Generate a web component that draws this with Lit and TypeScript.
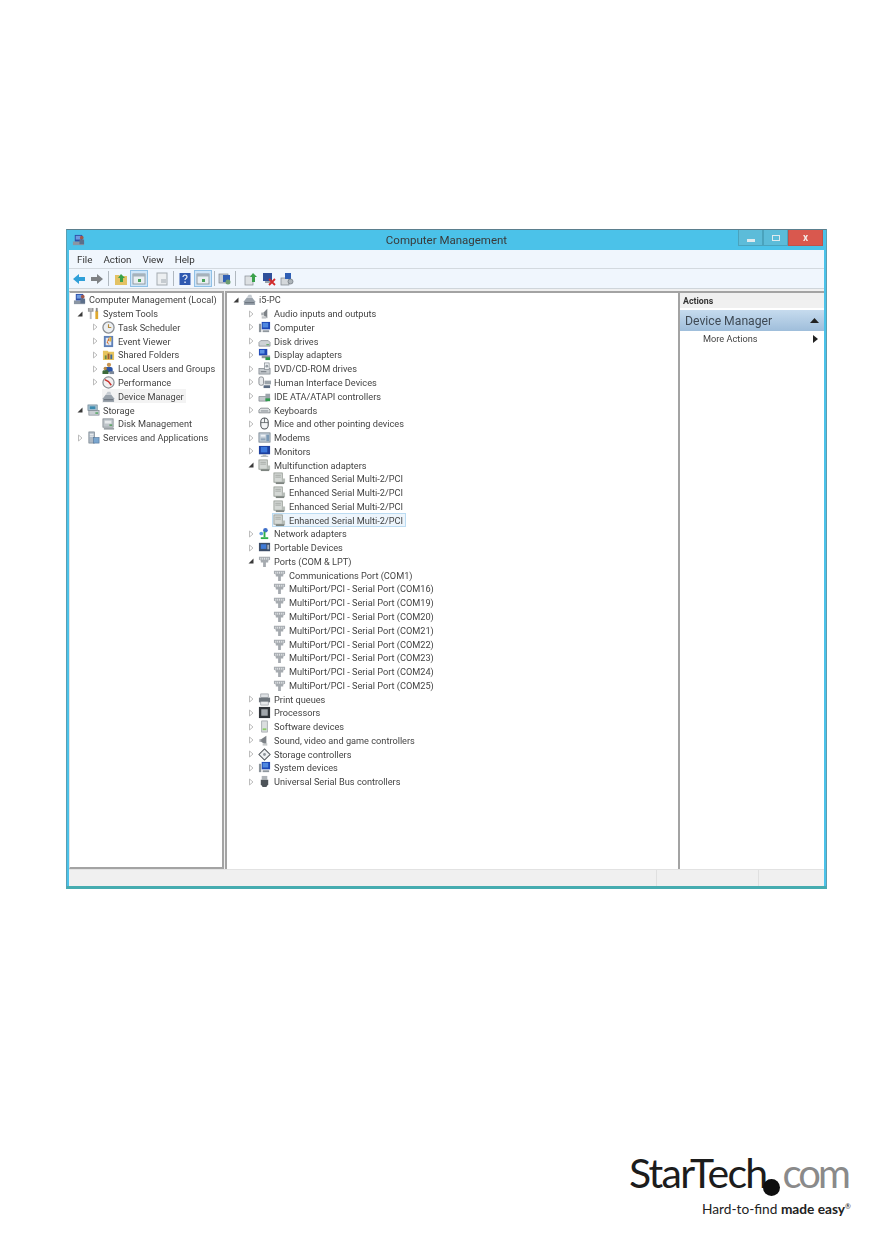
import { LitElement, html, css, svg } from "lit";
import { customElement } from "lit/decorators.js";

const icons: Record<string, any> = {
  mgmt: svg`<rect x="1" y="8" width="12" height="4" fill="#8a95a3"/><rect x="3" y="1" width="8" height="7" fill="#2c4fa8"/><rect x="4" y="2" width="6" height="4" fill="#6f9be0"/><circle cx="10.5" cy="4" r="2" fill="#a0574c"/><rect x="8" y="6" width="5" height="5" fill="#5c6f8a"/>`,
  tools: svg`<rect x="3" y="1" width="2" height="12" fill="#b9b9b9"/><path d="M1 1h2v3h2V1h2v4H1z" fill="#9a9a9a"/><rect x="9" y="4" width="3" height="9" fill="#e0a92c"/><rect x="9.5" y="1" width="2" height="4" fill="#8a8a8a"/>`,
  clock: svg`<circle cx="7" cy="7" r="6" fill="#eceff2" stroke="#8b8f94" stroke-width="1.4"/><path d="M7 3.5V7h3" fill="none" stroke="#b58a3a" stroke-width="1.2"/>`,
  event: svg`<rect x="2" y="1" width="10" height="12" fill="#5e80b8"/><rect x="4" y="3" width="6" height="8" fill="#dfe8f4"/><path d="M7 3l1 3-2 1 2 4-3-3 1-2z" fill="#d9702a"/><rect x="8" y="2" width="2" height="5" fill="#e3b13a"/>`,
  folder: svg`<path d="M1 3h5l1 1h6v9H1z" fill="#e7c45c"/><rect x="3" y="8" width="2" height="4" fill="#6a8a40"/><rect x="6" y="6" width="2" height="6" fill="#a05a30"/><rect x="9" y="7" width="2" height="5" fill="#3d6a9a"/>`,
  users: svg`<circle cx="7.5" cy="3" r="2.3" fill="#c9954f"/><path d="M3.5 11V7.500c0-1.500 1-2.200 2-2.200h4c1 0 2 .8 2 2.200V11z" fill="#2d55a5"/><circle cx="3.5" cy="7" r="1.8" fill="#b88844"/><path d="M.5 13v-2.500c0-1 1-1.500 2-1.500h2.500c1 0 2 .5 2 1.500V13z" fill="#3d6a3a"/><rect x="8" y="10" width="5" height="3" fill="#7c8898"/>`,
  perf: svg`<circle cx="7" cy="7" r="6" fill="#f1eff0" stroke="#8b8f94" stroke-width="1.3"/><path d="M3 4l4 2 3 4" fill="none" stroke="#c9302c" stroke-width="1.5"/>`,
  dm: svg`<path d="M1 9l3-4h6l3 4v4H1z" fill="#9aa3ac"/><path d="M4 5l2-3h3l1 3z" fill="#c4cad0"/><rect x="2" y="10" width="10" height="1" fill="#5f6871"/>`,
  storage: svg`<rect x="1" y="1" width="10" height="6" fill="#a9c1cf" stroke="#64808f" stroke-width=".7"/><rect x="3" y="2.500" width="6" height="3" fill="#3b8bb0"/><rect x="2" y="7" width="11" height="5" fill="#c9ced3" stroke="#7d868e" stroke-width=".7"/><rect x="9" y="9" width="3" height="1.500" fill="#4aa35a"/>`,
  disk: svg`<rect x="1" y="2" width="11" height="9" fill="#bfc5ca" stroke="#7c848b" stroke-width=".8"/><rect x="3" y="4" width="7" height="3" fill="#e7eaec"/><path d="M2 12h11v1.500H2z" fill="#8a9197"/><rect x="8" y="8" width="3" height="1.500" fill="#4c9c54"/>`,
  services: svg`<rect x="2" y="1" width="6" height="12" fill="#aeb9c4" stroke="#6f7b87" stroke-width=".7"/><rect x="3" y="3" width="4" height="1" fill="#fff"/><rect x="3" y="5" width="4" height="1" fill="#fff"/><rect x="7" y="7" width="6" height="6" fill="#7aa6cf" stroke="#56789a" stroke-width=".7"/>`,
  audio: svg`<path d="M6 6l4-4v10L6 9z" fill="#7d8287"/><rect x="3.500" y="6" width="2.500" height="3" fill="#a7abaf"/><rect x="4" y="10" width="5" height="2.500" fill="#c2c5c8"/>`,
  computer: svg`<rect x="4" y="1" width="9" height="8" fill="#1d46b5"/><rect x="5" y="2" width="6" height="5" fill="#4f88e0"/><rect x="1" y="3" width="2.500" height="9" fill="#8c949b"/><rect x="5" y="10" width="7" height="2" fill="#8f979e"/>`,
  diskdrive: svg`<path d="M1 8l2-2h8l2 2v4H1z" fill="#cfd3d6" stroke="#7e858b" stroke-width=".7"/><rect x="9" y="10" width="3" height="1" fill="#4a9c50"/>`,
  display: svg`<rect x="1" y="1" width="9" height="7" fill="#1d46b5"/><rect x="2" y="2" width="5" height="4" fill="#5e94e6"/><rect x="4" y="8" width="9" height="3" fill="#8f979e"/><rect x="8" y="10" width="5" height="3" fill="#2b9446"/>`,
  dvd: svg`<rect x="1" y="7" width="12" height="6" fill="#c4c9cd" stroke="#737b82" stroke-width=".7"/><rect x="7" y="1" width="5" height="7" fill="#eef1f3" stroke="#7b838a" stroke-width=".7"/><circle cx="9.500" cy="4.500" r="1.500" fill="#98a0a6"/><rect x="3" y="10" width="6" height="1" fill="#6b7279"/>`,
  hid: svg`<rect x="1" y="1" width="5" height="9" rx="2" fill="#e7e9eb" stroke="#6c7278" stroke-width=".8"/><rect x="7" y="5" width="7" height="4" fill="#9aa2a9"/><rect x="6" y="10" width="7" height="3" fill="#5a6b82"/>`,
  ide: svg`<path d="M1 7h9v5H1z" fill="#c3c8cc" stroke="#7b8289" stroke-width=".7"/><rect x="8" y="4" width="5" height="8" fill="#9ca4ab"/><rect x="8" y="9" width="5" height="3" fill="#2f9a4c"/>`,
  kb: svg`<path d="M1 6.500l2-2h8l2 2v3H1z" fill="#dfe2e4" stroke="#6e757b" stroke-width=".8"/><rect x="3" y="7" width="8" height="1" fill="#7b8288"/>`,
  mouse: svg`<rect x="3" y="1" width="8" height="12" rx="4" fill="#f4f5f6" stroke="#4e5358" stroke-width="1.100"/><path d="M7 1v5M3 6h8" stroke="#4e5358" stroke-width=".8"/>`,
  modem: svg`<rect x="1" y="2" width="12" height="10" fill="#c1ccd6" stroke="#6f7c88" stroke-width=".8"/><rect x="3" y="4" width="5" height="2" fill="#eef2f6"/><rect x="9" y="4" width="3" height="7" fill="#7b99b5"/><rect x="3" y="8" width="5" height="2" fill="#8fa3b6"/>`,
  monitor: svg`<rect x="1" y="1" width="12" height="9" fill="#1d3f9e"/><rect x="3" y="2" width="7" height="6" fill="#3c78dc"/><path d="M5 10h4v1.500h2V13H3v-1.500h2z" fill="#b6bcc1"/>`,
  mf: svg`<rect x="1" y="1" width="9" height="10" fill="#d4d8d5" stroke="#8a9089" stroke-width=".8"/><rect x="2.500" y="3" width="6" height="1" fill="#a3a8a4"/><rect x="2.500" y="5" width="6" height="1" fill="#a3a8a4"/><rect x="10" y="7" width="3" height="5" fill="#b7bdb8"/><rect x="3" y="11" width="9" height="2" fill="#7e8580"/>`,
  net: svg`<circle cx="8" cy="3.500" r="2.500" fill="#3f6fc9"/><circle cx="3.500" cy="7" r="2" fill="#5c9ae0"/><path d="M3 11h8v2H3z" fill="#2fae4a"/><rect x="6" y="5" width="2" height="6" fill="#2fae4a"/>`,
  portable: svg`<rect x="1" y="2" width="12" height="9" fill="#3c4d68"/><rect x="3" y="3.500" width="6" height="5" fill="#3f7ad6"/><rect x="10" y="4" width="2" height="5" fill="#a8b2bd"/>`,
  port: svg`<path d="M1 2h12v3l-2 1v2H8.500v5h-3V8H3V6L1 5z" fill="#a6abb0"/><path d="M3 3v2M5 3v2M7 3v2M9 3v2M11 3v2" stroke="#eef0f2" stroke-width=".9"/>`,
  printer: svg`<rect x="3" y="1" width="8" height="4" fill="#dfe2e5" stroke="#7c838a" stroke-width=".6"/><rect x="1" y="5" width="12" height="5" fill="#6e757c"/><rect x="3" y="9" width="8" height="4" fill="#e7e9eb" stroke="#7c838a" stroke-width=".6"/>`,
  cpu: svg`<rect x="1" y="1" width="12" height="12" fill="#2f3338"/><rect x="3.500" y="3.500" width="7" height="7" fill="#a1a6ab"/>`,
  sw: svg`<rect x="4" y="1" width="6" height="12" fill="#dbdedf" stroke="#8b9196" stroke-width=".7"/><rect x="5" y="9" width="4" height="2" fill="#8ccc6a"/>`,
  sound: svg`<path d="M3 6l6-4v10L3 8z" fill="#7d8287"/><rect x="1.500" y="5.500" width="2" height="3" fill="#a7abaf"/><rect x="5" y="10" width="5" height="2.500" fill="#c6c9cb"/>`,
  stctl: svg`<path d="M7 1l6 6-6 6-6-6z" fill="#eef0f2" stroke="#4f555a" stroke-width="1.100"/><circle cx="7" cy="7" r="1.500" fill="#8e959b"/>`,
  usb: svg`<rect x="4" y="1" width="6" height="4" fill="#aeb3b8"/><path d="M3 5h8v5l-2 3H5l-2-3z" fill="#4d5359"/>`,
  back: svg`<path d="M1 7l6-5v3h6v4H7v3z" fill="#2f9fd8"/>`,
  forward: svg`<path d="M13 7L7 2v3H1v4h6v3z" fill="#7e8184"/>`,
  up: svg`<path d="M1 3h4l1 1h7v9H1z" fill="#e3c264"/><path d="M7 2l4 4H9v4H6V6H4z" fill="#3aa14a"/>`,
  box: svg`<rect x="1" y="2" width="12" height="10" fill="#e9eef2" stroke="#8a949c" stroke-width=".9"/><rect x="1" y="2" width="12" height="2.500" fill="#a6b2bb"/><rect x="6" y="7" width="3" height="3" fill="#4aa35a"/>`,
  page: svg`<rect x="2" y="1" width="10" height="12" fill="#eceff1" stroke="#a4abb1" stroke-width="1"/><rect x="6" y="7" width="5" height="4" fill="#c5cbd0"/>`,
  help: svg`<rect x="1.500" y="1" width="11" height="12" fill="#2f59b0"/><path d="M5 5c0-2.500 4-2.500 4 0 0 1.500-2 1.500-2 3" fill="none" stroke="#dfe8f7" stroke-width="1.200"/><rect x="6.300" y="9.500" width="1.500" height="1.500" fill="#dfe8f7"/>`,
  scan: svg`<rect x="1" y="2" width="9" height="9" fill="#c6cdd3" stroke="#7f8890" stroke-width=".7"/><rect x="5" y="3" width="7" height="7" fill="#2f5fb5"/><circle cx="10" cy="10" r="2.500" fill="#6e9e72"/>`,
  update: svg`<rect x="1" y="4" width="8" height="9" fill="#dde1e3" stroke="#868d93" stroke-width=".7"/><path d="M9 1l4 4h-2v5H8V5H6z" fill="#3aa14a"/>`,
  remove: svg`<rect x="1" y="1" width="9" height="8" fill="#2f4f9a"/><rect x="3" y="9" width="6" height="2" fill="#9aa2a9"/><path d="M7 7l6 6M13 7l-6 6" stroke="#d22a2a" stroke-width="1.800"/>`,
  hw: svg`<rect x="1" y="6" width="8" height="7" fill="#d4d8db" stroke="#7d848a" stroke-width=".7"/><rect x="5" y="1" width="6" height="6" fill="#2f5fb5"/><circle cx="10.500" cy="9.500" r="2.500" fill="#aeb5ba" stroke="#6f767c" stroke-width=".7"/>`,
};
icons.pc = icons.dm;
icons.sys = icons.computer;

type Row = { d: number; label: string; icon: string; open?: boolean; leaf?: boolean; cls?: string };

const left: Row[] = [
  { d: 0, label: "Computer Management (Local)", icon: "mgmt", leaf: true, cls: "root" },
  { d: 0, label: "System Tools", icon: "tools", open: true },
  { d: 1, label: "Task Scheduler", icon: "clock" },
  { d: 1, label: "Event Viewer", icon: "event" },
  { d: 1, label: "Shared Folders", icon: "folder" },
  { d: 1, label: "Local Users and Groups", icon: "users" },
  { d: 1, label: "Performance", icon: "perf" },
  { d: 1, label: "Device Manager", icon: "dm", leaf: true, cls: "soft" },
  { d: 0, label: "Storage", icon: "storage", open: true },
  { d: 1, label: "Disk Management", icon: "disk", leaf: true },
  { d: 0, label: "Services and Applications", icon: "services" },
];

const serial = (label: string, cls?: string): Row => ({ d: 2, label, icon: "mf", leaf: true, cls });
const port = (label: string): Row => ({ d: 2, label, icon: "port", leaf: true });
const center: Row[] = [
  { d: 0, label: "i5-PC", icon: "pc", open: true },
  { d: 1, label: "Audio inputs and outputs", icon: "audio" },
  { d: 1, label: "Computer", icon: "computer" },
  { d: 1, label: "Disk drives", icon: "diskdrive" },
  { d: 1, label: "Display adapters", icon: "display" },
  { d: 1, label: "DVD/CD-ROM drives", icon: "dvd" },
  { d: 1, label: "Human Interface Devices", icon: "hid" },
  { d: 1, label: "IDE ATA/ATAPI controllers", icon: "ide" },
  { d: 1, label: "Keyboards", icon: "kb" },
  { d: 1, label: "Mice and other pointing devices", icon: "mouse" },
  { d: 1, label: "Modems", icon: "modem" },
  { d: 1, label: "Monitors", icon: "monitor" },
  { d: 1, label: "Multifunction adapters", icon: "mf", open: true },
  serial("Enhanced Serial Multi-2/PCI"),
  serial("Enhanced Serial Multi-2/PCI"),
  serial("Enhanced Serial Multi-2/PCI"),
  serial("Enhanced Serial Multi-2/PCI", "sel"),
  { d: 1, label: "Network adapters", icon: "net" },
  { d: 1, label: "Portable Devices", icon: "portable" },
  { d: 1, label: "Ports (COM & LPT)", icon: "port", open: true },
  port("Communications Port (COM1)"),
  port("MultiPort/PCI - Serial Port (COM16)"),
  port("MultiPort/PCI - Serial Port (COM19)"),
  port("MultiPort/PCI - Serial Port (COM20)"),
  port("MultiPort/PCI - Serial Port (COM21)"),
  port("MultiPort/PCI - Serial Port (COM22)"),
  port("MultiPort/PCI - Serial Port (COM23)"),
  port("MultiPort/PCI - Serial Port (COM24)"),
  port("MultiPort/PCI - Serial Port (COM25)"),
  { d: 1, label: "Print queues", icon: "printer" },
  { d: 1, label: "Processors", icon: "cpu" },
  { d: 1, label: "Software devices", icon: "sw" },
  { d: 1, label: "Sound, video and game controllers", icon: "sound" },
  { d: 1, label: "Storage controllers", icon: "stctl" },
  { d: 1, label: "System devices", icon: "sys" },
  { d: 1, label: "Universal Serial Bus controllers", icon: "usb" },
];

const tools: { icon?: string; cls: string }[] = [
  { icon: "back", cls: "t" },
  { icon: "forward", cls: "t" },
  { cls: "sep wide" },
  { icon: "up", cls: "t" },
  { icon: "box", cls: "t on" },
  { icon: "page", cls: "t gap5" },
  { cls: "sep" },
  { icon: "help", cls: "t" },
  { icon: "box", cls: "t on" },
  { cls: "sep" },
  { icon: "scan", cls: "t tight" },
  { cls: "sep" },
  { icon: "update", cls: "t gap3" },
  { icon: "remove", cls: "t" },
  { icon: "hw", cls: "t" },
];

const ic = (name: string, size = 13) =>
  html`<svg class="ic" width=${size} height=${size} viewBox="0 0 14 14">${icons[name]}</svg>`;

@customElement("app-root")
export class AppRoot extends LitElement {
  static styles = css`
    :host {
      display: flex;
      flex-direction: column;
      align-items: flex-start;
      height: 1259px;
      background: #fff;
      padding: 229px 0 0 66px;
      box-sizing: border-box;
      font-family: Roboto, "Open Sans", sans-serif;
      color: #444;
      overflow: hidden;
    }
    .win {
      width: 761px;
      height: 660px;
      box-sizing: border-box;
      background: #4bc2e9;
      border: 1px solid #5a9fb3;
      border-top-color: #5b7f8e;
      border-bottom: 3px solid #46acb0;
      display: flex;
      flex-direction: column;
      filter: blur(0.55px);
      padding: 0 2px 0 2px;
    }
    .title {
      height: 20px;
      display: grid;
      grid-template-columns: 76px 1fr 86px;
      align-items: center;
      font-size: 11.500px;
      color: #3a3a3a;
    }
    .title .name { text-align: center; padding-left: 10px; }
    .title svg { margin-left: 3px; }
    .caps { display: flex; justify-self: end; align-self: start; margin-right: 1px; }
    .cap {
      width: 25px;
      height: 16px;
      box-sizing: border-box;
      display: flex;
      align-items: center;
      justify-content: center;
      background: #5cbcd9;
      border: 1px solid #4aa3bd;
      border-top: 0;
    }
    .cap.close {
      width: 35px;
      background: #d9584e;
      border-color: #c0534a;
      color: #f4e9e6;
      font-size: 10px;
      font-weight: 700;
    }
    .cap i { display: block; background: #dfeaee; }
    .cap .min { width: 8px; height: 3px; margin-top: 5px; }
    .cap .max { width: 8px; height: 6px; border: 1.500px solid #dfeaee; background: #5cbcd9; box-sizing: border-box; }
    .menu {
      height: 18px;
      background: #f0f6fd;
      border-bottom: 1px solid #d3d9df;
      display: flex;
      align-items: center;
      gap: 11px;
      padding-left: 8px;
      font-size: 9.800px;
      color: #333;
    }
    .toolbar {
      height: 19px;
      background: #f0f6fd;
      border-bottom: 1px solid #cfd5da;
      display: flex;
      align-items: center;
      padding-left: 1px;
    }
    .t {
      width: 18px;
      height: 17px;
      box-sizing: border-box;
      display: flex;
      align-items: center;
      justify-content: center;
      flex: none;
    }
    .t.on { background: #cfe5f8; border: 1px solid #8fc0e6; }
    .t.gap5 { margin-left: 5px; }
    .t.gap3 { margin-left: 4px; }
    .t.tight { width: 16px; }
    .sep { width: 1px; height: 15px; background: #b0b8bf; margin: 0 2px; flex: none; }
    .sep.wide { margin-right: 3px; }
    .body {
      flex: 1;
      display: flex;
      background: #f0f0f0;
      padding-top: 2px;
      min-height: 0;
    }
    .pane { background: #fff; box-sizing: border-box; overflow: hidden; }
    .pl {
      width: 155px;
      border: 1px solid #a3a3a3;
      border-left: 1px solid #e6e6e6;
      border-width: 2px 2px 2px 1px;
      padding: 0 0 0 3px;
      height: 578px;
    }
    .pc {
      width: 453px;
      margin-left: 1px;
      border-left: 2px solid #a3a3a3;
      border-top: 2px solid #a3a3a3;
      padding: 0 0 0 2px;
    }
    .pr {
      flex: 1;
      border-left: 2px solid #a3a3a3;
      border-top: 2px solid #a3a3a3;
      margin-left: 0;
      font-size: 9.200px;
    }
    .row {
      height: 13.770px;
      display: flex;
      align-items: center;
      font-size: 9.200px;
      white-space: nowrap;
    }
    .indent1 { padding-left: 15px; }
    .indent2 { padding-left: 30px; }
    .arrow { width: 14px; height: 10px; flex: none; display: flex; align-items: center; justify-content: center; }
    .item { display: flex; align-items: center; height: 14px; gap: 3px; padding-right: 2px; box-sizing: border-box; }
    .ic { flex: none; display: block; }
    .item.soft { background: #f3f3f3; }
    .item.sel { background: #edf5fc; border: 1px solid #bcdcf3; margin-left: -1px; margin-right: -1px; }
    .acthead {
      height: 15px;
      background: #f0f0f0;
      font-weight: 700;
      font-size: 8.800px;
      padding-left: 3px;
      display: flex;
      align-items: center;
      color: #333;
    }
    .actband {
      margin-top: 2px;
      height: 21px;
      background: linear-gradient(#c6dbee, #9fbedb);
      display: flex;
      align-items: center;
      justify-content: space-between;
      padding: 0 5px 0 5px;
      font-size: 12.200px;
      color: #3f4a55;
    }
    .more {
      height: 15px;
      display: flex;
      align-items: center;
      justify-content: space-between;
      padding: 0 6px 0 23px;
      margin-top: 0;
    }
    .status {
      height: 17px;
      background: #f0f0f0;
      border-top: 1px solid #e2e2e2;
      display: grid;
      grid-template-columns: 1fr 102px 66px;
      box-sizing: border-box;
    }
    .status span { border-left: 1px solid #e0e0e0; }
    .status span:first-child { border-left: 0; }
    .logo {
      margin: 264px 0 0 563px;
      position: relative;
      width: 225px;
      color: #1c1c1c;
      font-family: "Lato", "Open Sans", sans-serif;
    }
    .brand {
      display: flex;
      align-items: baseline;
      height: 40px;
      line-height: 40px;
      font-size: 41px;
      font-weight: 400;
      letter-spacing: -1.700px;
    }
    .brand .com { color: #8a8a8a; margin-left: 16px; font-size: 40px; letter-spacing: -3px; }
    .dot {
      position: absolute;
      left: 134px;
      top: 26px;
      width: 17px;
      height: 17px;
      border-radius: 50%;
      background: #0e0e0e;
    }
    .tag {
      margin: 9px 0 0 73px;
      font-size: 13.700px;
      line-height: 14px;
      white-space: nowrap;
      color: #222;
    }
    .tag b { font-weight: 700; }
    .tag sup { font-size: 7px; vertical-align: 5px; line-height: 0; }
  `;

  private arrow(r: Row) {
    if (r.leaf) return html`<span class="arrow"></span>`;
    return html`<span class="arrow">
      <svg width="8" height="8" viewBox="0 0 8 8">
        ${r.open
          ? svg`<path d="M1.500 6.500L6.500 1.500V6.500Z" fill="#3a3a3a"/>`
          : svg`<path d="M2.500 1L6 4 2.500 7Z" fill="#fff" stroke="#b5b5b5" stroke-width=".9"/>`}
      </svg>
    </span>`;
  }

  private row(r: Row) {
    return html`<div class="row indent${r.d}">
      ${r.cls === "root" ? null : this.arrow(r)}
      <span class="item ${r.cls ?? ""}">${ic(r.icon)}<span>${r.label}</span></span>
    </div>`;
  }

  render() {
    return html`
      <div class="win">
        <div class="title">
          <span>${ic("mgmt", 13)}</span>
          <span class="name">Computer Management</span>
          <span class="caps">
            <span class="cap"><i class="min"></i></span>
            <span class="cap"><i class="max"></i></span>
            <span class="cap close">x</span>
          </span>
        </div>
        <div class="menu"><span>File</span><span>Action</span><span>View</span><span>Help</span></div>
        <div class="toolbar">
          ${tools.map((t) =>
            t.icon ? html`<span class=${t.cls}>${ic(t.icon, 14)}</span>` : html`<span class=${t.cls}></span>`
          )}
        </div>
        <div class="body">
          <div class="pane pl">${left.map((r) => this.row(r))}</div>
          <div class="pane pc">${center.map((r) => this.row(r))}</div>
          <div class="pane pr">
            <div class="acthead">Actions</div>
            <div class="actband">
              <span>Device Manager</span>
              <svg width="9" height="5" viewBox="0 0 9 5"><path d="M0 5L4.500 0 9 5Z" fill="#222"/></svg>
            </div>
            <div class="more">
              <span>More Actions</span>
              <svg width="5" height="8" viewBox="0 0 5 8"><path d="M0 0L5 4 0 8Z" fill="#222"/></svg>
            </div>
          </div>
        </div>
        <div class="status"><span></span><span></span><span></span></div>
      </div>
      <div class="logo">
        <div class="brand"><span>StarTech</span><span class="com">com</span></div>
        <span class="dot"></span>
        <div class="tag">Hard-to-find <b>made easy</b><sup>®</sup></div>
      </div>
    `;
  }
}
